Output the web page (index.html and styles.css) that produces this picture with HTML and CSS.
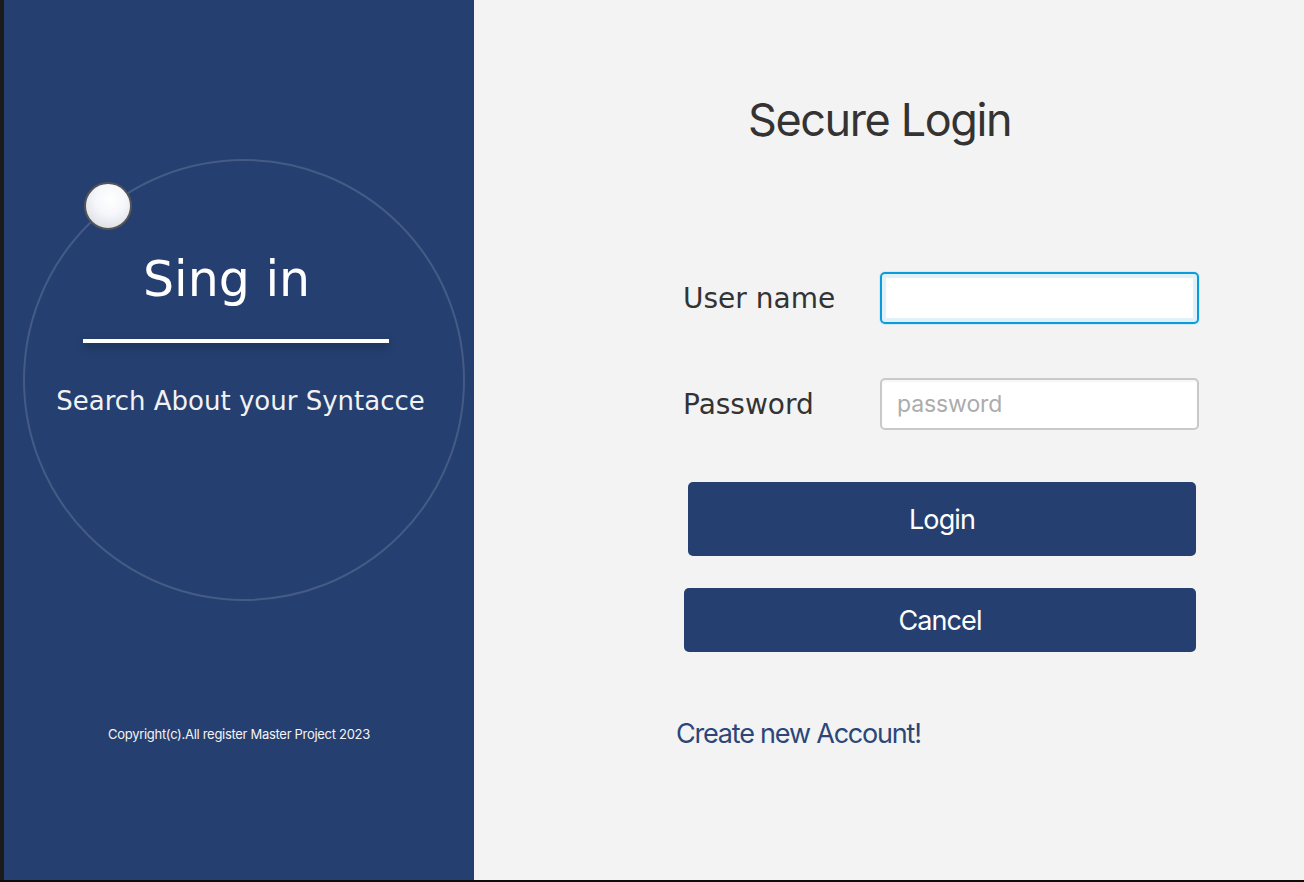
FILE: index.html
```html
<!DOCTYPE html>
<html lang="en">
<head>
<meta charset="utf-8">
<title>Secure Login</title>
<link rel="stylesheet" href="styles.css">
</head>
<body>
<div class="window">
  <div class="main-row">
    <div class="edge"></div>
    <aside class="side">
      <div class="circle">
        <span class="knob"></span>
        <h2 class="side-title">Sing in</h2>
        <div class="rule"></div>
        <p class="side-sub">Search About your Syntacce</p>
      </div>
      <p class="copyright">Copyright(c).All register Master Project 2023</p>
    </aside>
    <main class="form-area">
      <h1 class="title">Secure Login</h1>
      <div class="field field-user">
        <label class="label" for="user">User name</label>
        <input class="input input-focus" id="user" type="text">
      </div>
      <div class="field field-pass">
        <label class="label" for="pass">Password</label>
        <input class="input" id="pass" type="password" placeholder="password">
      </div>
      <button class="btn btn-login" type="button">Login</button>
      <button class="btn btn-cancel" type="button">Cancel</button>
      <a class="create-link" href="#">Create new Account!</a>
    </main>
  </div>
  <div class="bottom-bar"></div>
</div>
</body>
</html>
```
FILE: styles.css
```css
* { box-sizing: border-box; }

html, body {
  margin: 0;
  padding: 0;
  background: #f3f3f3;
}

.window {
  width: 1304px;
  height: 882px;
  display: flex;
  flex-direction: column;
  overflow: hidden;
}

.main-row {
  display: flex;
  height: 880px;
}

.bottom-bar {
  height: 2px;
  background: #0c0c0c;
}

.edge {
  width: 4px;
  background: #1b1b1b;
}

/* left panel */
.side {
  width: 470px;
  background: #253f70;
  display: flex;
  flex-direction: column;
  align-items: flex-start;
}

.circle {
  position: relative;
  margin: 159px 0 0 19px;
  width: 442px;
  height: 442px;
  border-radius: 50%;
  border: 2px solid rgba(255, 255, 255, 0.15);
  display: flex;
  flex-direction: column;
  align-items: center;
  padding-top: 91px;
}

.knob {
  position: absolute;
  left: 59px;
  top: 21px;
  width: 48px;
  height: 48px;
  border-radius: 50%;
  border: 2.5px solid #555558;
  background: radial-gradient(circle at 55% 35%, #ffffff 0%, #f6f7fb 40%, #d3d5de 100%);
}

.side-title {
  margin: 0 35px 0 0;
  font-family: "DejaVu Sans", sans-serif;
  font-weight: normal;
  font-size: 49px;
  line-height: 56px;
  color: #ffffff;
}

.rule {
  margin: 31px 16px 0 0;
  width: 306px;
  height: 4px;
  background: #ffffff;
  box-shadow: 0 4px 8px rgba(0, 0, 0, 0.35);
}

.side-sub {
  margin: 43px 7px 0 0;
  font-family: "DejaVu Sans", sans-serif;
  font-size: 26px;
  line-height: 30px;
  color: #f2f2f2;
  white-space: nowrap;
}

.copyright {
  align-self: center;
  margin: 125px 0 0 0;
  font-family: Inter, "Liberation Sans", sans-serif;
  font-size: 13px;
  line-height: 16px;
  letter-spacing: -0.3px;
  color: #f4f4f4;
}

/* right panel */
.form-area {
  flex: 1;
  background: #f3f3f3;
  display: flex;
  flex-direction: column;
  align-items: flex-start;
  padding: 92px 0 0 209px;
}

.title {
  margin: 0 0 0 65px;
  font-family: Inter, "Liberation Sans", sans-serif;
  font-weight: normal;
  font-size: 45px;
  line-height: 56px;
  letter-spacing: -1.4px;
  color: #333333;
}

.field {
  display: flex;
  align-items: center;
}

.field-user { margin-top: 124px; }
.field-pass { margin-top: 54px; }

.label {
  width: 197px;
  font-family: "DejaVu Sans", sans-serif;
  font-size: 28px;
  line-height: 33px;
  color: #333333;
}

.input {
  width: 319px;
  height: 52px;
  border: 2px solid #c9c9c9;
  border-radius: 5px;
  background: #ffffff;
  padding: 0 15px;
  font-family: Inter, "Liberation Sans", sans-serif;
  font-size: 23px;
  letter-spacing: -0.1px;
  color: #333;
  outline: none;
  box-shadow: inset 0 2px 2px rgba(0, 0, 0, 0.04);
}

.input::placeholder {
  color: #acacac;
}

.input-focus {
  border-color: #0a9bd8;
  box-shadow: inset 0 0 0 4px #e1f1f9, 0 0 0 1px #d6ebf5;
}

.btn {
  border: none;
  border-radius: 5px;
  background: #253f70;
  color: #ffffff;
  font-family: Inter, "Liberation Sans", sans-serif;
  font-size: 27px;
  letter-spacing: -0.9px;
  padding: 0;
  cursor: pointer;
}

.btn-login {
  margin: 52px 0 0 5px;
  width: 508px;
  height: 74px;
}

.btn-cancel {
  margin: 32px 0 0 1px;
  width: 512px;
  height: 64px;
}

.create-link {
  margin: 66px 0 0 -7px;
  font-family: Inter, "Liberation Sans", sans-serif;
  font-size: 27px;
  line-height: 32px;
  letter-spacing: -1.2px;
  color: #2b4677;
  text-decoration: none;
}
```
